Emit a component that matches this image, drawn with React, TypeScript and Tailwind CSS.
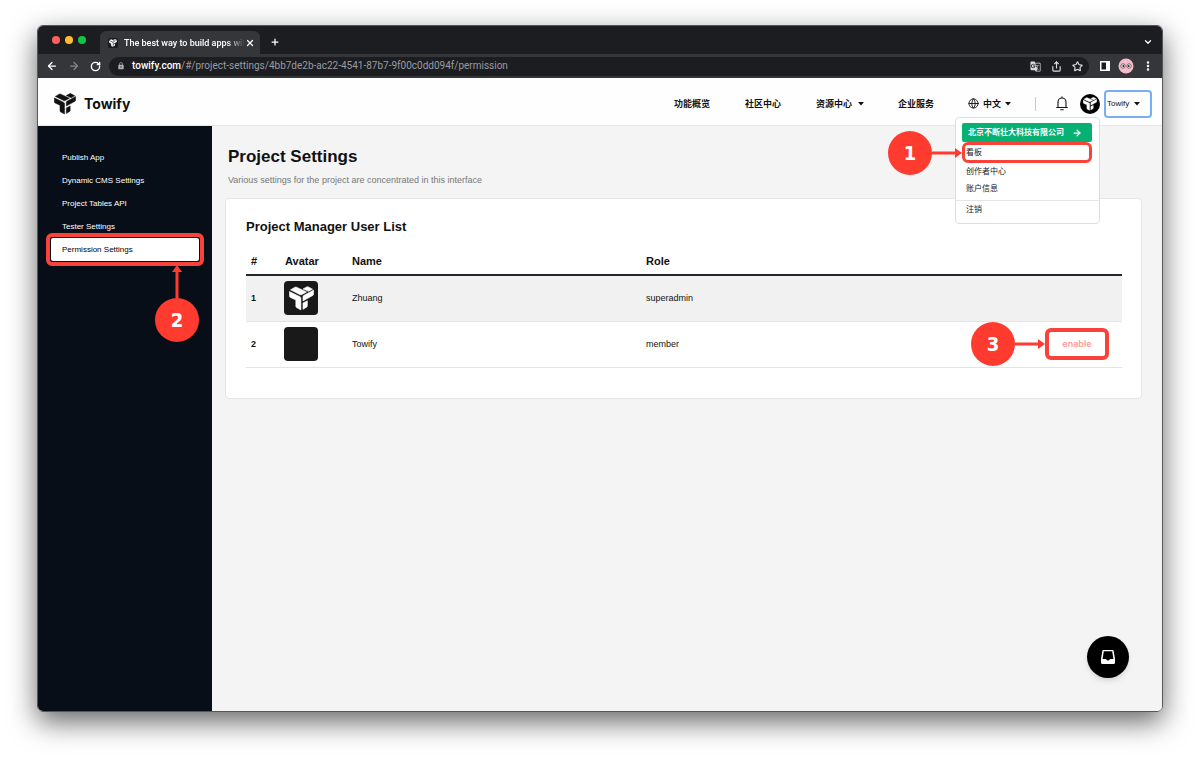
import React from "react";
import {
  ArrowLeft,
  ArrowRight,
  ChevronDown,
  EllipsisVertical,
  Globe,
  Plus,
  RotateCw,
  Share,
  Star,
  X,
} from "lucide-react";
import { MdGTranslate, MdLock } from "react-icons/md";

const navLinks = ["功能概览", "社区中心"];

const sideLinks = [
  "Publish App",
  "Dynamic CMS Settings",
  "Project Tables API",
  "Tester Settings",
];

const LogoMark = ({ className }: { className?: string }) => (
  <svg viewBox="-1 0 68 66" className={className} fill="currentColor" stroke="currentColor" strokeWidth="1.5" strokeLinejoin="round" aria-hidden="true">
    <path d="M3 9.500 15 2.500q2.500-1.500 5 0L47 15 33.500 22.500Q31.500 23.500 29 22.500Z" />
    <path d="M37 7 47 1.500q2.500-1.500 5 0l11 6-11 6Z" />
    <path d="M37 28q0-2.500 2-3.500L66 10v11q0 2.500-2 3.500L37 39.500Z" />
    <path d="M0 14l29 14q2.500 1.500 2.500 4v32L20 58q-2.500-1.500-2.500-4V37L2.500 30Q0 28.500 0 26Z" />
    <path d="M37 45.500 49 39v14q0 2.500-2 3.500L37 62.500Z" />
  </svg>
);

const Caret = () => (
  <svg viewBox="0 0 6 4" className="w-1.5 h-1" fill="currentColor" aria-hidden="true">
    <path d="M0 0h6L3 3.500Z" />
  </svg>
);

const Step = ({ n }: { n: number }) => (
  <span className="flex shrink-0 items-center justify-center size-11 rounded-full bg-[#ff3b30] text-white text-xl leading-none font-bold font-['DejaVu_Sans_Condensed','DejaVu_Sans',sans-serif]">
    {n}
  </span>
);

// numbered marker sitting to the left of a highlighted control
const StepLeft = ({ n }: { n: number }) => (
  <span className="absolute right-full top-1/2 -translate-y-1/2 flex items-center">
    <Step n={n} />
    <svg viewBox="0 0 30 10" className="w-[30px] h-2.5 shrink-0" fill="#ff3b30" aria-hidden="true">
      <path d="M0 3.500h23V0l7 5-7 5V6.500H0Z" />
    </svg>
  </span>
);

const BrowserBar = () => (
  <div className="text-white font-[Roboto,sans-serif]">
    <div className="flex items-end h-7 bg-[#1c1d21] pl-[14px] pr-[9px]">
      <div className="flex gap-[5px] pb-2.5">
        <span className="size-2 rounded-full bg-[#ff6159]" />
        <span className="size-2 rounded-full bg-[#ffbd2e]" />
        <span className="size-2 rounded-full bg-[#12c544]" />
      </div>
      <div className="flex items-center h-[23px] w-40 ml-[14px] pl-2 pr-1.5 rounded-t-md bg-[#35363a]">
        <span className="flex items-center justify-center size-2.5 rounded-xs bg-[#1a1a1a] shrink-0">
          <LogoMark className="size-2" />
        </span>
        <span className="flex-1 ml-1.5 whitespace-nowrap text-[9px] leading-3 font-medium mask-r-from-85%">
          The best way to build apps wit
        </span>
        <button aria-label="Close tab"><X className="size-2.5" strokeWidth={3} /></button>
      </div>
      <button aria-label="New tab" className="ml-2.5 pb-[7px]"><Plus className="size-2.5" strokeWidth={3} /></button>
      <button aria-label="Search tabs" className="ml-auto pb-[7px]"><ChevronDown className="size-2.5" strokeWidth={3} /></button>
    </div>
    <div className="flex items-center h-6 bg-[#35363a] pl-2 pr-2">
      <button aria-label="Back"><ArrowLeft className="size-3" strokeWidth={2.5} /></button>
      <button aria-label="Forward" className="ml-2.5 text-[#85868a]"><ArrowRight className="size-3" strokeWidth={2.5} /></button>
      <button aria-label="Reload" className="ml-2.5"><RotateCw className="size-[11px]" strokeWidth={3} /></button>
      <div className="flex flex-1 items-center h-[19px] ml-2 pl-2 pr-1.5 rounded-full bg-[#1c1d21]">
        <MdLock className="size-2 text-[#b0b1b5]" />
        <a href="#" className="ml-[7px] text-[10px] leading-3 text-[#9b9ca1]">
          <span className="text-white font-medium">towify.com</span>
          /#/project-settings/4bb7de2b-ac22-4541-87b7-9f00c0dd094f/permission
        </a>
        <div className="flex items-center gap-2.5 ml-auto text-[#dcdde0]">
          <MdGTranslate className="size-[11px]" />
          <Share className="size-[11px]" strokeWidth={2.5} />
          <Star className="size-[11px]" strokeWidth={2.5} />
        </div>
      </div>
      <svg viewBox="0 0 10 10" className="size-2.5 ml-[11px]" aria-hidden="true">
        <path d="M0 0h10v10H0Z" fill="#fff" />
        <path d="M1.500 1.500h4.500v7H1.500Z" fill="#1c1d21" />
      </svg>
      <svg viewBox="0 0 16 16" className="size-4 ml-2" aria-hidden="true">
        <circle cx="8" cy="8" r="7.500" fill="#f7bccb" />
        <g fill="#fff" stroke="#5a4048" strokeWidth=".8">
          <circle cx="5" cy="8" r="2.200" />
          <circle cx="11" cy="8" r="2.200" />
        </g>
        <circle cx="5.300" cy="8" r="1" fill="#222" />
        <circle cx="10.700" cy="8" r="1" fill="#222" />
      </svg>
      <button aria-label="Menu" className="ml-2"><EllipsisVertical className="size-3" strokeWidth={3} /></button>
    </div>
  </div>
);

const UserMenu = () => (
  <div className="absolute z-10 right-[62px] top-[39px] w-[145px] rounded-sm border border-[#dedede] bg-white pt-[5px] pb-1 text-[8px] leading-3 text-[#222]">
    <div className="pl-1.5 pr-[7px]">
      <button className="flex w-full items-center h-[19px] px-1.5 rounded-xs bg-[#07b073] text-white font-bold whitespace-nowrap">
        北京不断壮大科技有限公司
        <ArrowRight className="size-2.5 ml-2" strokeWidth={3} />
      </button>
      <div className="relative h-[21px]">
        <a href="#" className="flex items-center size-full pl-px rounded-md border-3 border-[#f9423a]">看板</a>
        <StepLeft n={1} />
      </div>
      <a href="#" className="flex items-center h-[17px] px-1">创作者中心</a>
      <a href="#" className="flex items-center h-[17px] px-1">账户信息</a>
    </div>
    <hr className="mt-[3px] border-[#e5e5e5]" />
    <a href="#" className="flex items-center h-[18px] px-2.5">注销</a>
  </div>
);

const Header = () => (
  <header className="relative flex items-center h-12 pl-4 pr-2.5 pt-2 pb-1 bg-[#fefefe] border-b border-[#e6e6e6]">
    <a href="#" className="flex items-center gap-2">
      <LogoMark className="w-[22px] h-[22px]" />
      <span className="text-sm font-bold font-[Inter,sans-serif]">Towify</span>
    </a>
    <nav className="flex items-center ml-auto text-[9px] leading-4 font-bold">
      {navLinks.map((label) => (
        <a key={label} href="#" className="mr-[35px]">{label}</a>
      ))}
      <button className="flex items-center gap-1.5 mr-[34px]">资源中心 <Caret /></button>
      <a href="#" className="mr-[34px]">企业服务</a>
      <button className="flex items-center">
        <Globe className="size-[11px] mr-1" strokeWidth={2} />
        <span className="mr-1">中文</span>
        <Caret />
      </button>
    </nav>
    <span className="w-px h-3.5 ml-6 bg-[#c8c8c8]" />
    <button aria-label="Notifications" className="ml-5">
      <svg viewBox="0 0 12 15" className="w-3 h-[15px]" fill="none" stroke="#111" strokeWidth="1.1" strokeLinecap="round" strokeLinejoin="round">
        <path d="M6 .7v1M2 11V6a4 4 0 0 1 8 0v5M.7 11.500h10.600" />
        <path d="M4.700 13.800h2.600" />
      </svg>
    </button>
    <span className="flex items-center justify-center size-5 ml-3 rounded-full bg-black text-white">
      <LogoMark className="size-3.5" />
    </span>
    <button className="flex items-center justify-between w-12 h-7 ml-1 pl-px pr-2.5 rounded-sm border-2 border-[#78aef5] text-[8px]">
      Towify <Caret />
    </button>
    <UserMenu />
  </header>
);

const Sidebar = () => (
  <aside className="w-[174px] shrink-0 bg-[#070e17] px-[13px] pt-5 text-[8px] leading-3 text-white">
    {sideLinks.map((label) => (
      <a key={label} href="#" className="flex items-center h-[23px] px-[11px] font-medium">{label}</a>
    ))}
    <div className="relative">
      <a href="#" className="flex items-center h-[23px] px-[11px] rounded-xs bg-white text-black">
        Permission Settings
      </a>
      <span className="absolute -inset-[5px] rounded-md border-4 border-[#f9423a]" />
      <span className="absolute right-0 top-full flex flex-col items-center pt-1">
        <svg viewBox="0 0 10 33" className="w-2.5 h-[33px]" fill="#ff3b30" aria-hidden="true">
          <path d="M5 0l5 7H6.500v26h-3V7H0Z" />
        </svg>
        <Step n={2} />
      </span>
    </div>
  </aside>
);

const UserTable = () => (
  <table className="w-full table-fixed text-left text-[9px] leading-4">
    <thead className="text-[11px]">
      <tr className="h-7 border-b-2 border-[#25262b]">
        <th className="w-[34px] px-[5px]">#</th>
        <th className="w-[67px] px-[5px]">Avatar</th>
        <th className="w-[294px] px-[5px]">Name</th>
        <th className="px-[5px]">Role</th>
        <th className="w-24" aria-label="Action"></th>
      </tr>
    </thead>
    <tbody>
      <tr className="h-[46px] border-b border-[#e4e4e4] bg-[#f1f1f1]">
        <th className="px-[5px]">1</th>
        <td className="px-1">
          <span className="flex items-center justify-center size-[34px] rounded-sm bg-[#191919] text-white">
            <LogoMark className="size-[25px]" />
          </span>
        </td>
        <td className="px-[5px]">Zhuang</td>
        <td className="px-[5px]">superadmin</td>
        <td></td>
      </tr>
      <tr className="h-[46px] border-b border-[#e4e4e4]">
        <th className="px-[5px]">2</th>
        <td className="px-1">
          <span className="block size-[34px] rounded-sm bg-[#191919]" />
        </td>
        <td className="px-[5px]">Towify</td>
        <td className="px-[5px]">member</td>
        <td className="pr-[13px]">
          <div className="relative w-16 h-8 ml-auto">
            <button className="size-full rounded-md border-4 border-[#f9423a] text-[#ff9c9c] font-semibold font-[Inter,sans-serif]">
              enable
            </button>
            <StepLeft n={3} />
          </div>
        </td>
      </tr>
    </tbody>
  </table>
);

const App = () => {
  return (
    <div className="flex flex-col min-h-screen px-[37px] pt-[25px] pb-[49px] bg-white text-[#111] font-['Liberation_Sans','Noto_Sans_CJK_SC',sans-serif]">
      <div className="relative flex flex-1 flex-col overflow-hidden rounded-md border border-[#55565a] shadow-[0_10px_28px_rgba(0,0,0,0.6)]">
        <BrowserBar />
        <Header />
        <div className="flex flex-1">
          <Sidebar />
          <main className="flex-1 bg-[#f4f4f4] pl-[13px] pr-5 pt-[19px]">
            <h1 className="px-[3px] text-[17px] leading-6 font-bold">Project Settings</h1>
            <p className="px-[3px] mt-[3px] text-[9px] leading-4 text-[#777]">
              Various settings for the project are concentrated in this interface
            </p>
            <section className="mt-2.5 pl-5 pr-[19px] pt-[18px] pb-[30px] rounded-sm border border-[#e6e6e6] bg-white">
              <h2 className="mb-2.5 text-[13px] leading-5 font-bold">Project Manager User List</h2>
              <UserTable />
            </section>
          </main>
        </div>
        <button aria-label="Messages" className="absolute right-[33px] bottom-[33px] flex items-center justify-center size-[42px] rounded-full bg-black shadow-md">
          <svg viewBox="0 0 14 14" className="size-3.5" aria-hidden="true">
            <path fill="#fff" fillRule="evenodd" d="M2.500 0h9q1 0 1.200 1L14 9v3.500q0 1.500-1.500 1.500h-11Q0 14 0 12.500V9l1.300-8Q1.500 0 2.500 0ZM2.800 1.300 1.600 9H4.500q.5 0 .8.500.5 1 1.700 1t1.700-1q.3-.5.8-.5h2.900l-1.200-7.700Z" />
          </svg>
        </button>
      </div>
    </div>
  );
};

export default App;
